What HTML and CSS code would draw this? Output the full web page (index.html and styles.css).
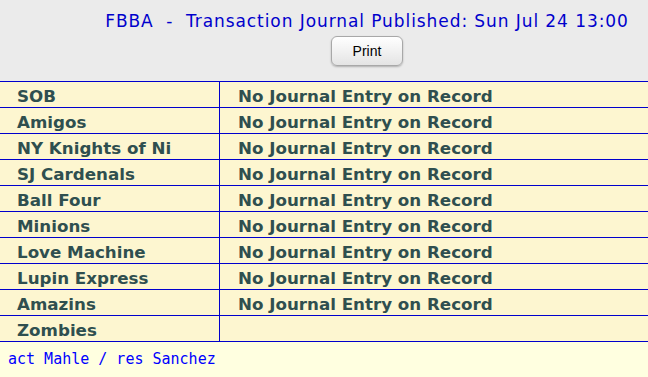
FILE: index.html
```html
<!DOCTYPE html>
<html>
<head>
<meta charset="utf-8">
<link rel="stylesheet" href="styles.css">
</head>
<body>
<div class="header">
  <div class="title">FBBA&nbsp; -&nbsp; Transaction Journal Published: Sun Jul 24 13:00</div>
  <button class="print">Print</button>
</div>
<table class="journal">
  <tr><td class="team">SOB</td><td class="entry">No Journal Entry on Record</td></tr>
  <tr><td class="team">Amigos</td><td class="entry">No Journal Entry on Record</td></tr>
  <tr><td class="team">NY Knights of Ni</td><td class="entry">No Journal Entry on Record</td></tr>
  <tr><td class="team">SJ Cardenals</td><td class="entry">No Journal Entry on Record</td></tr>
  <tr><td class="team">Ball Four</td><td class="entry">No Journal Entry on Record</td></tr>
  <tr><td class="team">Minions</td><td class="entry">No Journal Entry on Record</td></tr>
  <tr><td class="team">Love Machine</td><td class="entry">No Journal Entry on Record</td></tr>
  <tr><td class="team">Lupin Express</td><td class="entry">No Journal Entry on Record</td></tr>
  <tr><td class="team">Amazins</td><td class="entry">No Journal Entry on Record</td></tr>
  <tr><td class="team">Zombies</td><td class="entry"></td></tr>
</table>
<div class="note">act Mahle / res Sanchez</div>
</body>
</html>
```
FILE: styles.css
```css
html, body {
  margin: 0;
  padding: 0;
  background: #ffffe0;
}
.header {
  background: #ebebeb;
  height: 81px;
  box-sizing: border-box;
  padding: 10px 0 0 86px;
  display: flex;
  flex-direction: column;
  align-items: center;
}
.title {
  font-family: "DejaVu Sans", Verdana, sans-serif;
  font-size: 17px;
  letter-spacing: 0.92px;
  line-height: 23px;
  color: #0000cc;
  white-space: nowrap;
}
.print {
  margin-top: 3px;
  width: 72px;
  height: 30px;
  font-family: "Liberation Sans", Arial, sans-serif;
  font-size: 14px;
  color: #000;
  background: linear-gradient(#ffffff, #e4e4e4);
  border: 1px solid #a8a8a8;
  border-radius: 6px;
  box-shadow: 0 1px 2px rgba(0,0,0,0.25);
  padding: 0;
}
.journal {
  width: 100%;
  border-collapse: collapse;
  background: #fdf6d0;
  border-top: 1px solid #0000cc;
}
.journal td {
  height: 23px;
  padding: 2px 0 0 0;
  box-sizing: content-box;
  border-bottom: 1px solid #0000cc;
  font-family: "DejaVu Sans", Verdana, sans-serif;
  font-weight: bold;
  font-size: 16.7px;
  line-height: 20px;
  color: #2f4f4f;
  white-space: nowrap;
}
.journal .team {
  width: 202px;
  padding-left: 17px;
  border-right: 1px solid #0000cc;
}
.journal .entry {
  padding-left: 18px;
}
.note {
  padding: 8px 8px;
  font-family: "DejaVu Sans Mono", monospace;
  font-size: 15px;
  color: #0000ff;
}
```
